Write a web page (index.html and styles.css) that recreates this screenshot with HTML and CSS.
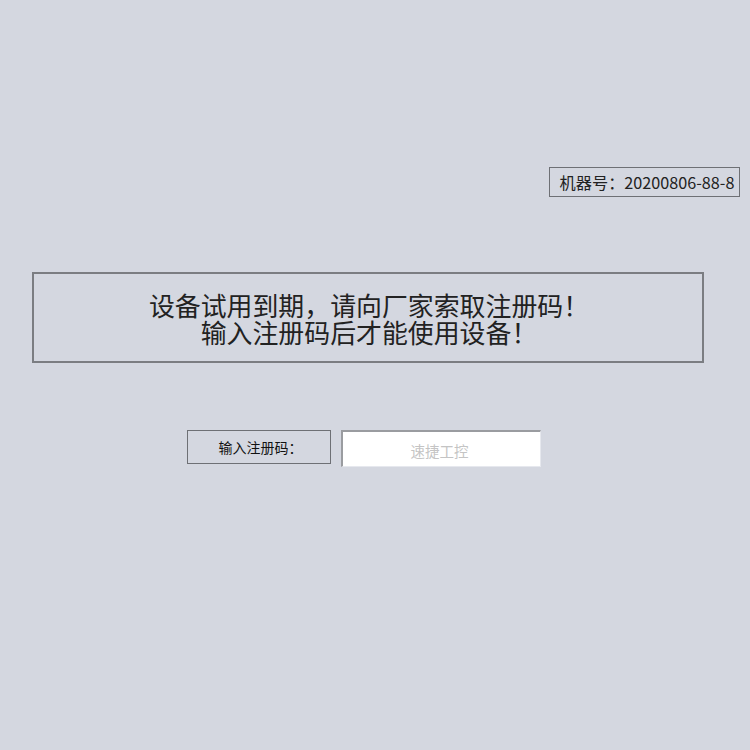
FILE: index.html
```html
<!DOCTYPE html>
<html lang="zh-CN">
<head>
<meta charset="utf-8">
<title>注册</title>
<link rel="stylesheet" href="styles.css">
</head>
<body>
<div class="page">
  <div class="machine-row">
    <div class="machine">机器号：20200806-88-8</div>
  </div>
  <div class="notice">
    <p class="notice-line">设备试用到期，请向厂家索取注册码！</p>
    <p class="notice-line">输入注册码后才能使用设备！</p>
  </div>
  <div class="reg-row">
    <div class="reg-label">输入注册码：</div>
    <div class="reg-input">速捷工控</div>
  </div>
</div>
</body>
</html>
```
FILE: styles.css
```css
html, body {
  margin: 0;
  padding: 0;
}
body {
  background: #d4d7e0;
  font-family: "Noto Sans CJK SC", "Noto Sans", sans-serif;
  color: #222;
  width: 750px;
  height: 750px;
  overflow: hidden;
}
.page {
  display: flex;
  flex-direction: column;
}
.machine-row {
  display: flex;
  justify-content: flex-end;
  margin-top: 167px;
  padding-right: 10px;
}
.machine {
  box-sizing: border-box;
  width: 191px;
  height: 30px;
  border: 1px solid #6e7075;
  display: flex;
  align-items: center;
  justify-content: center;
  font-size: 16.2px;
  color: #222;
  padding-left: 5px;
}
.notice {
  box-sizing: border-box;
  margin-top: 75px;
  margin-left: 32px;
  width: 672px;
  height: 91px;
  border: 2px solid #7b7d82;
  display: flex;
  flex-direction: column;
  align-items: center;
  justify-content: center;
  padding-top: 1px;
}
.notice-line {
  margin: 0;
  font-size: 25.9px;
  line-height: 28px;
  padding-left: 2px;
}
.notice-line + .notice-line {
  margin-top: -1px;
}
.reg-row {
  display: flex;
  align-items: flex-start;
  margin-top: 67px;
  margin-left: 187px;
  gap: 10px;
}
.reg-label {
  box-sizing: border-box;
  width: 144px;
  height: 34px;
  border: 1px solid #6e7075;
  display: flex;
  align-items: center;
  justify-content: center;
  font-size: 14px;
  color: #111;
  padding-left: 3px;
}
.reg-input {
  box-sizing: border-box;
  width: 200px;
  height: 37px;
  background: #fff;
  border-top: 2px solid #9a9ca0;
  border-left: 2px solid #9a9ca0;
  border-right: 1px solid #e6e8ee;
  border-bottom: 1px solid #e6e8ee;
  display: flex;
  align-items: center;
  justify-content: center;
  font-size: 14.5px;
  color: #c4c4c4;
  padding-top: 2px;
  padding-right: 4px;
}
```
